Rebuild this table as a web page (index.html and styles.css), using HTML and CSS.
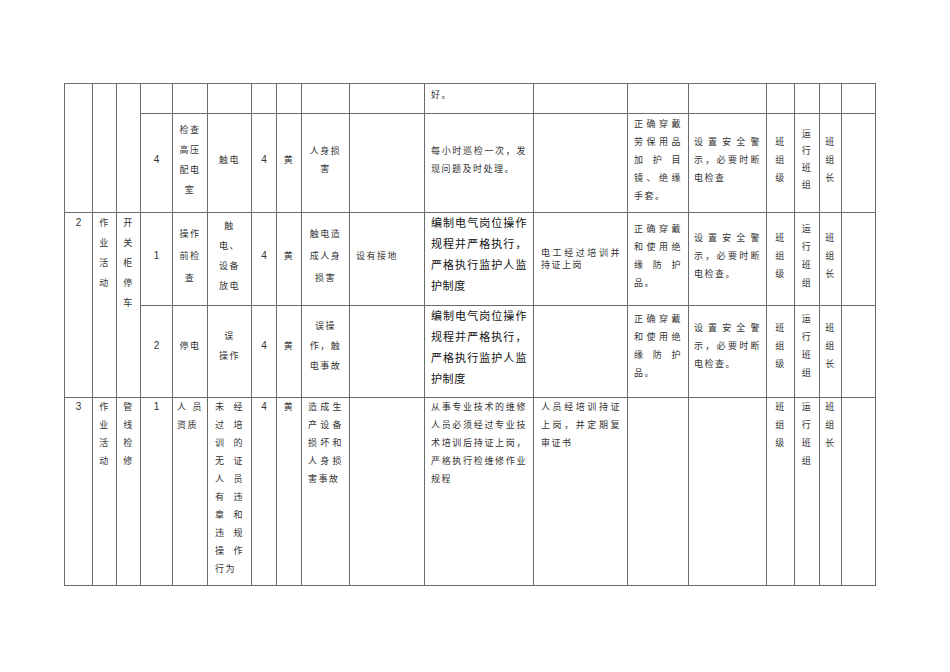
FILE: index.html
```html
<!DOCTYPE html>
<html lang="zh-CN">
<head>
<meta charset="utf-8">
<title>风险评价表</title>
<link rel="stylesheet" href="styles.css">
</head>
<body>
<table class="sheet">
  <colgroup>
    <col class="w28"><col class="w24"><col class="w24"><col class="w32"><col class="w35"><col class="w44">
    <col class="w25"><col class="w25"><col class="w48"><col class="w75"><col class="w109"><col class="w94">
    <col class="w61"><col class="w78"><col class="w28"><col class="w25"><col class="w22"><col class="w34">
  </colgroup>
  <tr class="ra">
    <td rowspan="2"></td><td rowspan="2"></td><td rowspan="2"></td>
    <td></td><td></td><td></td><td></td><td></td><td></td><td></td>
    <td class="c11 top j first">好。</td>
    <td></td><td></td><td></td><td></td><td></td><td></td><td></td>
  </tr>
  <tr class="rb">
    <td class="n">4</td>
    <td class="c5 lh20">检查高压配电室</td>
    <td class="c6">触电</td>
    <td class="n">4</td>
    <td>黄</td>
    <td class="c9">人身损害</td>
    <td class="c10"></td>
    <td class="c11 j">每小时巡检一次，发现问题及时处理。</td>
    <td class="c12"></td>
    <td class="c13 j">正确穿戴劳保用品加护目镜、绝缘手套。</td>
    <td class="c14 j">设置安全警示，必要时断电检查</td>
    <td>班<br>组<br>级</td>
    <td class="lh17">运<br>行<br>班<br>组</td>
    <td>班<br>组<br>长</td>
    <td></td>
  </tr>
  <tr class="rc">
    <td rowspan="2" class="n top lh20">2</td>
    <td rowspan="2" class="top lh20">作<br>业<br>活<br>动</td>
    <td rowspan="2" class="top lh20">开<br>关<br>柜<br>停<br>车</td>
    <td class="n">1</td>
    <td class="c5 lh22">操作前检查</td>
    <td class="c6 lh20">触电、设备放电</td>
    <td class="n">4</td>
    <td>黄</td>
    <td class="c9 lh22">触电造成人身损害</td>
    <td class="c10 j">设有接地</td>
    <td class="c11 top j big">编制电气岗位操作规程并严格执行，严格执行监护人监护制度</td>
    <td class="c12 j tight">电工经过培训并持证上岗</td>
    <td class="c13 j">正确穿戴和使用绝缘防护品。</td>
    <td class="c14 j">设置安全警示，必要时断电检查。</td>
    <td>班<br>组<br>级</td>
    <td>运<br>行<br>班<br>组</td>
    <td>班<br>组<br>长</td>
    <td></td>
  </tr>
  <tr class="rd">
    <td class="n">2</td>
    <td class="c5">停电</td>
    <td class="c6 lh20">误<br>操作</td>
    <td class="n">4</td>
    <td>黄</td>
    <td class="c9 lh20">误操作，触电事故</td>
    <td class="c10"></td>
    <td class="c11 top j big">编制电气岗位操作规程并严格执行，严格执行监护人监护制度</td>
    <td class="c12"></td>
    <td class="c13 j">正确穿戴和使用绝缘防护品。</td>
    <td class="c14 j">设置安全警示，必要时断电检查。</td>
    <td>班<br>组<br>级</td>
    <td>运<br>行<br>班<br>组</td>
    <td>班<br>组<br>长</td>
    <td></td>
  </tr>
  <tr class="re">
    <td class="n">3</td>
    <td>作<br>业<br>活<br>动</td>
    <td>管<br>线<br>检<br>修</td>
    <td class="n">1</td>
    <td class="c5 j">人员资质</td>
    <td class="c6 j">未经过培训的无证人员有违章和违规操作行为</td>
    <td class="n">4</td>
    <td>黄</td>
    <td class="c9 j">造成生产设备损坏和人身损害事故</td>
    <td class="c10"></td>
    <td class="c11 j">从事专业技术的维修人员必须经过专业技术培训后持证上岗，严格执行检维修作业规程</td>
    <td class="c12 j">人员经培训持证上岗，并定期复审证书</td>
    <td class="c13"></td>
    <td class="c14"></td>
    <td>班<br>组<br>级</td>
    <td>运<br>行<br>班<br>组</td>
    <td>班<br>组<br>长</td>
    <td></td>
  </tr>
</table>
</body>
</html>
```
FILE: styles.css
```css
html, body {
  margin: 0;
  padding: 0;
  background: #ffffff;
}

body {
  font-family: "Liberation Sans", "Noto Sans CJK SC", sans-serif;
  color: #333333;
}

.sheet {
  margin: 83px 0 0 64px;
  width: 811px;
  border-collapse: collapse;
  table-layout: fixed;
  font-size: 9px;
  letter-spacing: 1.5px;
}

.w22 { width: 22px; }
.w24 { width: 24px; }
.w25 { width: 25px; }
.w28 { width: 28px; }
.w32 { width: 32px; }
.w34 { width: 34px; }
.w35 { width: 35px; }
.w44 { width: 44px; }
.w48 { width: 48px; }
.w61 { width: 61px; }
.w75 { width: 75px; }
.w78 { width: 78px; }
.w94 { width: 94px; }
.w109 { width: 109px; }

.sheet td {
  border: 1px solid #6a6a6a;
  padding: 0 2px;
  text-align: center;
  vertical-align: middle;
  line-height: 18px;
  overflow: hidden;
}

.ra { height: 30px; }
.rb { height: 99px; }
.rc { height: 93px; }
.rd { height: 92px; }
.re { height: 188px; }

.rb td { padding-bottom: 7px; }
.rc td { padding-bottom: 7px; }
.rd td { padding-bottom: 11px; }
.re td { vertical-align: top; padding-top: 0; }

.sheet td.top {
  vertical-align: top;
  padding-bottom: 0;
}

.sheet td.first { padding-top: 2px; }

.sheet .n {
  font-size: 10px;
  letter-spacing: 0;
}

.sheet .j {
  text-align: justify;
  text-align-last: left;
}

.sheet .c5 { padding-left: 4px; padding-right: 4px; }
.sheet .c6 { padding-left: 7px; padding-right: 7px; }
.sheet .c9 { padding-left: 6px; padding-right: 6px; }
.sheet .c10 { padding-left: 6px; padding-right: 6px; }
.sheet .c11 { padding-left: 6px; padding-right: 6px; }
.sheet .c12 { padding-left: 7px; padding-right: 6px; }
.sheet .c13 { padding-left: 6px; padding-right: 6px; }
.sheet .c14 { padding-left: 5px; padding-right: 5px; }

.sheet .lh17 { line-height: 17px; }
.sheet .lh20 { line-height: 20px; }
.sheet .lh22 { line-height: 22px; }

.sheet td.tight {
  line-height: 12px;
  padding-bottom: 0;
}

.sheet .big {
  font-size: 11px;
  letter-spacing: 0.6px;
  line-height: 21px;
  color: #111111;
}
```
